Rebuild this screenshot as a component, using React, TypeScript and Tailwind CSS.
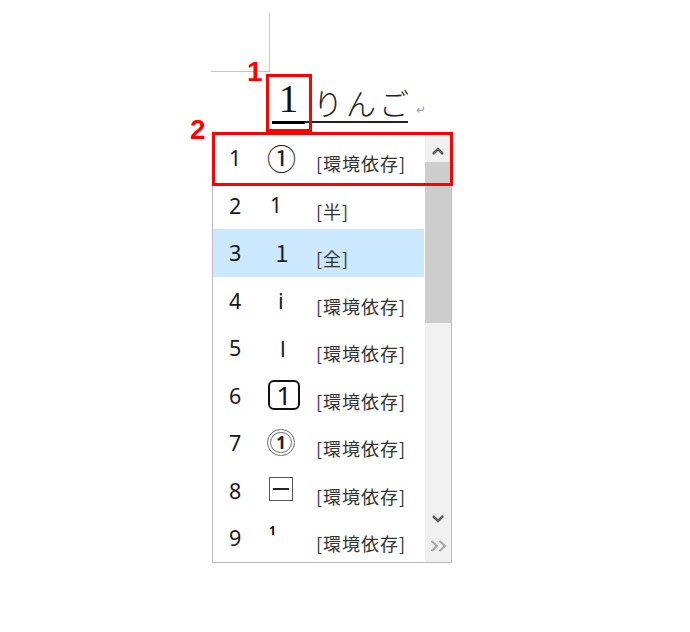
import React from "react";

const sans = { fontFamily: '"Noto Sans", "Open Sans", sans-serif' };

function Cand({ kind }: { kind: number }) {
  switch (kind) {
    case 1:
      return <span className="ml-[-3px] text-[29px] leading-none text-[#222] [font-family:'Noto_Sans_CJK_JP',sans-serif]">①</span>;
    case 2:
      return <span className="text-[21px] leading-none text-[#1a1a1a] [font-family:'Noto_Sans',sans-serif]">1</span>;
    case 3:
      return <span className="ml-[1px] inline-block w-[22px] text-center text-[23px] leading-none text-[#1a1a1a] [font-family:'Noto_Sans_CJK_JP',sans-serif]">1</span>;
    case 4:
      return <span className="ml-[8px] text-[22px] leading-none text-[#1a1a1a] [font-family:'Noto_Sans',sans-serif]">i</span>;
    case 5:
      return <span className="ml-[10px] text-[22px] leading-none text-[#1a1a1a] [font-family:'Noto_Sans',sans-serif]">l</span>;
    case 6:
      return (
        <span className="ml-[-2px] flex h-[30px] w-[32px] items-center justify-center rounded-[6px] border-2 border-[#111] text-[26px] leading-none text-[#111] [font-family:'Noto_Sans',sans-serif]">
          1
        </span>
      );
    case 7:
      return (
        <span className="ml-[-3px] flex h-[27px] w-[28px] items-center justify-center rounded-full border-[4px] border-double border-[#6a6a6a] text-[17px] font-bold leading-none text-[#222] [font-family:'Noto_Sans',sans-serif]">
          1
        </span>
      );
    case 8:
      return (
        <span className="ml-[-1px] mt-[-2px] flex h-[24px] w-[24px] items-center justify-center border-[1.5px] border-[#555] bg-white">
          <span className="block h-[2px] w-[16px] bg-[#222]" />
        </span>
      );
    case 9:
      return <span className="ml-[-1px] mt-[-14px] text-[12px] font-bold leading-none text-[#111] [font-family:'Noto_Sans',sans-serif]">1</span>;
    default:
      return null;
  }
}

const rows = [
  { n: "1", k: 1, a: "[環境依存]" },
  { n: "2", k: 2, a: "[半]" },
  { n: "3", k: 3, a: "[全]" },
  { n: "4", k: 4, a: "[環境依存]" },
  { n: "5", k: 5, a: "[環境依存]" },
  { n: "6", k: 6, a: "[環境依存]" },
  { n: "7", k: 7, a: "[環境依存]" },
  { n: "8", k: 8, a: "[環境依存]" },
  { n: "9", k: 9, a: "[環境依存]" },
];

export default function App() {
  return (
    <div className="relative h-[632px] w-[690px] overflow-hidden bg-white" style={sans}>
      {/* margin corner mark */}
      <div className="ml-[211px] mt-[13px] h-[59px] w-[59px] border-b border-r border-[#c6c6c6]" />

      {/* composing text */}
      <div className="ml-[272px] flex h-[52px] items-end">
        <span className="flex w-[33px] justify-center border-b-[3px] border-black pb-[3px] text-[39px] leading-none text-[#111] [font-family:'Liberation_Serif',serif]">
          1
        </span>
        <span className="mb-[1px] flex w-[103px] whitespace-nowrap border-b-[2px] border-[#222] pb-[4px] pl-[8px] text-[30px] font-light leading-none tracking-[3px] text-[#222] [font-family:'Noto_Sans_CJK_JP',sans-serif]">
          りんご
        </span>
        <span className="mb-[8px] ml-[8px] text-[12px] leading-none text-[#9a9a9a]">↵</span>
      </div>

      {/* candidate list */}
      <div className="ml-[212px] mt-[9px] flex w-[240px] border border-[#bcbcbc] bg-white">
        <div className="flex w-[211px] flex-col">
          {rows.map((r, i) => (
            <div
              key={r.n}
              className={`flex h-[47.5px] items-center ${i === 2 ? "bg-[#cce8ff]" : ""}`}
            >
              <span className="ml-[16px] w-[41px] text-[21.5px] leading-none text-[#1a1a1a]">{r.n}</span>
              <span className="flex w-[46px] items-center">
                <Cand kind={r.k} />
              </span>
              <span className="mt-[11px] whitespace-nowrap text-[18px] leading-none tracking-[1px] text-[#333] [font-family:'Noto_Sans_CJK_JP',sans-serif]">
                {r.a}
              </span>
            </div>
          ))}
        </div>
        <div className="ml-[1px] flex w-[26px] flex-col bg-[#f0f0f0]">
          <div className="flex h-[28px] items-center justify-center pt-[5px]">
            <svg width="12" height="8" viewBox="0 0 12 8">
              <path d="M1 7 L6 2 L11 7" fill="none" stroke="#606060" strokeWidth="2.6" />
            </svg>
          </div>
          <div className="h-[161px] bg-[#cdcdcd]" />
          <div className="flex-1" />
          <div className="flex h-[28px] items-center justify-center pt-[2px]">
            <svg width="12" height="8" viewBox="0 0 12 8">
              <path d="M1 1 L6 6 L11 1" fill="none" stroke="#606060" strokeWidth="2.6" />
            </svg>
          </div>
          <div className="flex h-[30px] items-center justify-center pb-[2px]">
            <svg width="17" height="12" viewBox="0 0 17 12">
              <path d="M1.5 1 L7 6 L1.5 11 M9.5 1 L15 6 L9.5 11" fill="none" stroke="#a8a8a8" strokeWidth="2.2" />
            </svg>
          </div>
        </div>
      </div>

      {/* annotation overlays */}
      <div className="absolute left-[247px] top-[58px] text-[28px] font-bold leading-none text-[#ff0000] [font-family:'Liberation_Sans',sans-serif]">
        1
      </div>
      <div className="absolute left-[190px] top-[116px] text-[28px] font-bold leading-none text-[#ff0000] [font-family:'Liberation_Sans',sans-serif]">
        2
      </div>
      <div className="absolute left-[266px] top-[74px] h-[58px] w-[46px] border-[3px] border-[#ff0000]" />
      <div className="absolute left-[212px] top-[132px] h-[54px] w-[241px] border-[3px] border-[#ff0000]" />
    </div>
  );
}
